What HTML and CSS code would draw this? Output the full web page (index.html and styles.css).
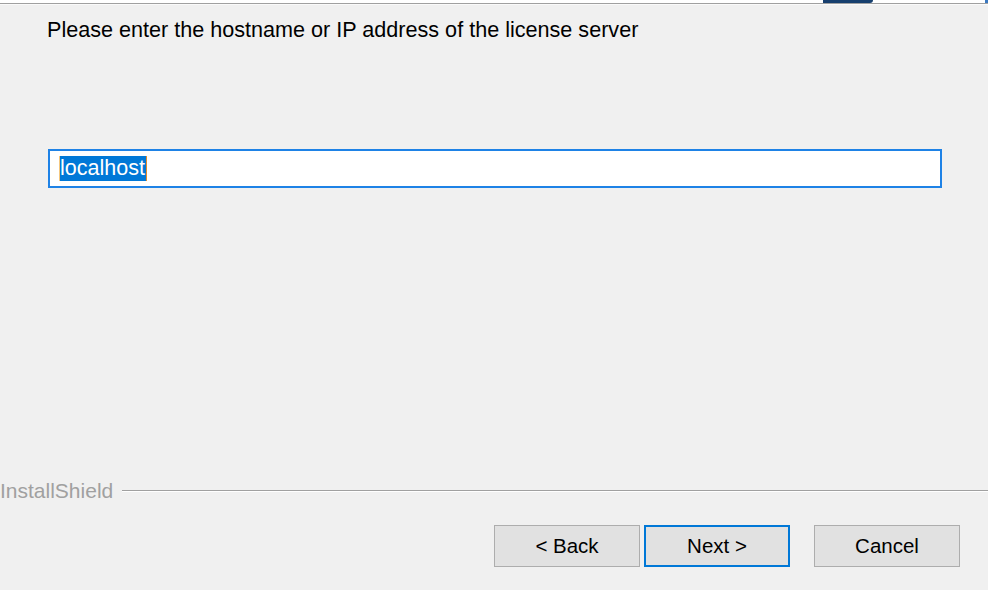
FILE: index.html
```html
<!DOCTYPE html>
<html>
<head>
<meta charset="utf-8">
<link rel="stylesheet" href="styles.css">
</head>
<body>
<div class="dialog">
  <div class="topbar">
    <div class="logo-bit"></div>
    <div class="logo-edge"></div>
  </div>
  <div class="content">
    <p class="prompt">Please enter the hostname or IP address of the license server</p>
    <div class="field"><span class="sel">localhost</span></div>
  </div>
  <div class="brand">
    <span class="brand-name">InstallShield</span>
    <span class="brand-line"></span>
  </div>
  <div class="buttons">
    <button class="btn">&lt; Back</button>
    <button class="btn default">Next &gt;</button>
    <button class="btn cancel">Cancel</button>
  </div>
</div>
</body>
</html>
```
FILE: styles.css
```css
html, body {
  margin: 0;
  padding: 0;
  background: #f0f0f0;
}
.dialog {
  width: 988px;
  height: 590px;
  display: flex;
  flex-direction: column;
  font-family: "Liberation Sans", Arial, sans-serif;
  color: #000;
  overflow: hidden;
}
.topbar {
  height: 3px;
  background: #fff;
  border-bottom: 1px solid #a0a0a0;
  box-shadow: 0 1px 0 #fafafa;
  display: flex;
  align-items: flex-start;
}
.logo-bit {
  margin-left: 823px;
  width: 50px;
  height: 3px;
  background: #173f6e;
  border-bottom-right-radius: 8px;
}
.logo-edge {
  margin-left: auto;
  width: 3px;
  height: 3px;
  background: #3a78c0;
}
.content {
  padding: 0 46px 0 48px;
  height: 474px;
}
.prompt {
  margin: 13px 0 0 -1px;
  font-size: 21.6px;
  line-height: 26px;
}
.field {
  margin-top: 106px;
  height: 35px;
  border: 2px solid #1e82e6;
  background: #fff;
  display: flex;
  align-items: center;
  padding-left: 9px;
}
.sel {
  background: #0078d7;
  color: #fff;
  font-size: 21.5px;
  line-height: 25px;
  padding: 0 1px 0 0;
  border-left: 1px solid #f5c77e;
  border-right: 1px solid #e08a2c;
}
.brand {
  display: flex;
  align-items: center;
  height: 24px;
  margin-top: 1px;
}
.brand-name {
  font-size: 21px;
  color: #a0a0a0;
  padding-right: 9px;
}
.brand-line {
  flex: 1;
  height: 1px;
  background: #a0a0a0;
  border-bottom: 1px solid #fff;
}
.buttons {
  display: flex;
  padding-left: 494px;
  margin-top: 22px;
}
.btn {
  width: 146px;
  height: 42px;
  background: #e1e1e1;
  border: 1px solid #adadad;
  font-family: "Liberation Sans", Arial, sans-serif;
  font-size: 20.5px;
  color: #000;
  padding: 0;
  margin: 0 4px 0 0;
}
.btn.default {
  border: 2px solid #0078d7;
  margin-right: 24px;
}
```
